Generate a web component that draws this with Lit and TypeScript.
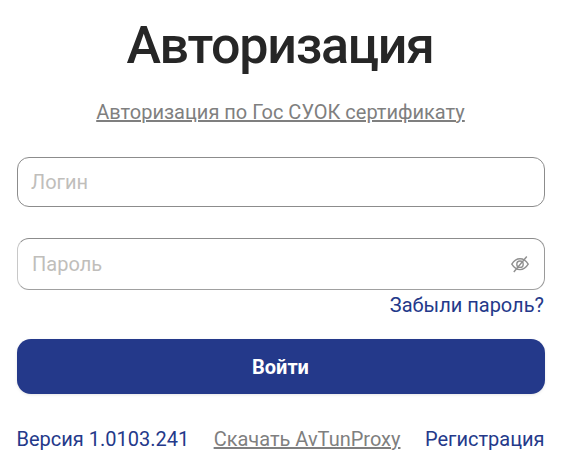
import { LitElement, html, css } from "lit";
import { customElement } from "lit/decorators.js";

@customElement("app-root")
export class AppRoot extends LitElement {
  static styles = css`
    :host { display: block; width: 564px; height: 460px; background: #fff; font-family: Roboto, sans-serif; overflow: hidden; }
    .wrap { display: flex; flex-direction: column; padding: 0 19px 0 17px; }
    h1 { margin: 14px 0 0; padding-right: 2px; font-size: 52px; letter-spacing: -1.3px; line-height: 64px; font-weight: 500; color: #262626; text-align: center; }
    .cert { margin-top: 22px; padding-right: 1px; text-align: center; font-size: 20px; line-height: 24px; color: #7f7f7f; text-decoration: underline; }
    .field { box-sizing: border-box; display: flex; align-items: center; justify-content: space-between; background: #fff; border: 1px solid #8c8c8c; border-radius: 12px; color: #c0bebb; font-size: 20px; }
    .login { margin-top: 33px; height: 50px; padding: 0 13px 0 13px; }
    .pass { margin-top: 31px; height: 52px; padding: 0 15px 0 14px; border-top-color: #8c8c8c; border-left-color: #c8c8c8; border-right-color: #9a9a9a; border-bottom-color: #a0a0a0; }
    .pass svg { display: block; }
    .forgot { margin-top: 3px; padding-right: 1px; text-align: right; font-size: 20px; line-height: 24px; color: #24398a; }
    button { margin: 22px 0 0; height: 55px; border: none; border-radius: 14px; background: #24398a; color: #fff; font: 700 20px Roboto, sans-serif; box-shadow: 0 1px 3px rgba(0,0,0,.1); padding: 0 1px 0 0; }
    .foot { margin: 33px 0 0 -0.5px; padding-right: 0.5px; display: flex; justify-content: space-between; font-size: 20px; line-height: 24px; color: #24398a; }
    .foot .dl { color: #7f7f7f; text-decoration: underline; }
  `;
  render() {
    return html`<div class="wrap">
      <h1>Авторизация</h1>
      <div class="cert">Авторизация по Гос СУОК сертификату</div>
      <div class="field login"><span>Логин</span></div>
      <div class="field pass"><span>Пароль</span>
        <svg width="18" height="18" viewBox="0 0 18 18" fill="none" stroke="#8f8f8f" stroke-width="1.4">
          <path d="M.8 9.2C3 5.600 5.800 3.800 9 3.800s6 1.800 8.200 5.400c-2.200 3.600-5 5.400-8.200 5.400S3 12.800.8 9.200Z"/>
          <circle cx="9" cy="9.200" r="3.200"/>
          <path d="M2.800 17 15.800 1.500"/>
        </svg>
      </div>
      <div class="forgot">Забыли пароль?</div>
      <button>Войти</button>
      <div class="foot"><span>Версия 1.0103.241</span><span class="dl">Скачать AvTunProxy</span><span>Регистрация</span></div>
    </div>`;
  }
}
